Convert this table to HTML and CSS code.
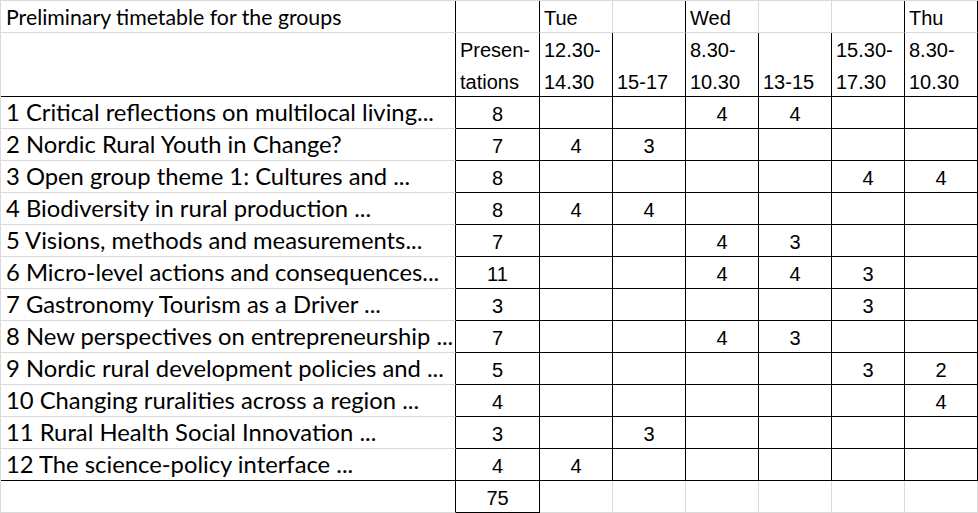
FILE: index.html
```html
<!DOCTYPE html>
<html>
<head>
<meta charset="utf-8">
<link rel="stylesheet" href="styles.css">
</head>
<body>
<div class="sheet">
  <div class="c title gb">Preliminary timetable for the groups</div>
  <div class="c gb"></div>
  <div class="c gb gr">Tue</div>
  <div class="c gb"></div>
  <div class="c gb gr">Wed</div>
  <div class="c gb gr"></div>
  <div class="c gb"></div>
  <div class="c gb">Thu</div>

  <div class="c name"></div>
  <div class="c">Presen-<br>tations</div>
  <div class="c">12.30-<br>14.30</div>
  <div class="c"><br>15-17</div>
  <div class="c">8.30-<br>10.30</div>
  <div class="c"><br>13-15</div>
  <div class="c">15.30-<br>17.30</div>
  <div class="c">8.30-<br>10.30</div>

  <div class="c name gb">1 Critical reflections on multilocal living...</div>
  <div class="c n">8</div><div class="c n"></div><div class="c n"></div><div class="c n">4</div><div class="c n">4</div><div class="c n"></div><div class="c n"></div>

  <div class="c name gb">2 Nordic Rural Youth in Change?</div>
  <div class="c n">7</div><div class="c n">4</div><div class="c n">3</div><div class="c n"></div><div class="c n"></div><div class="c n"></div><div class="c n"></div>

  <div class="c name gb">3 Open group theme 1: Cultures and ...</div>
  <div class="c n">8</div><div class="c n"></div><div class="c n"></div><div class="c n"></div><div class="c n"></div><div class="c n">4</div><div class="c n">4</div>

  <div class="c name gb">4 Biodiversity in rural production ...</div>
  <div class="c n">8</div><div class="c n">4</div><div class="c n">4</div><div class="c n"></div><div class="c n"></div><div class="c n"></div><div class="c n"></div>

  <div class="c name gb">5 Visions, methods and measurements...</div>
  <div class="c n">7</div><div class="c n"></div><div class="c n"></div><div class="c n">4</div><div class="c n">3</div><div class="c n"></div><div class="c n"></div>

  <div class="c name gb">6 Micro-level actions and consequences...</div>
  <div class="c n">11</div><div class="c n"></div><div class="c n"></div><div class="c n">4</div><div class="c n">4</div><div class="c n">3</div><div class="c n"></div>

  <div class="c name gb">7 Gastronomy Tourism as a Driver ...</div>
  <div class="c n">3</div><div class="c n"></div><div class="c n"></div><div class="c n"></div><div class="c n"></div><div class="c n">3</div><div class="c n"></div>

  <div class="c name gb">8 New perspectives on entrepreneurship ...</div>
  <div class="c n">7</div><div class="c n"></div><div class="c n"></div><div class="c n">4</div><div class="c n">3</div><div class="c n"></div><div class="c n"></div>

  <div class="c name gb">9 Nordic rural development policies and ...</div>
  <div class="c n">5</div><div class="c n"></div><div class="c n"></div><div class="c n"></div><div class="c n"></div><div class="c n">3</div><div class="c n">2</div>

  <div class="c name gb">10 Changing ruralities across a region ...</div>
  <div class="c n">4</div><div class="c n"></div><div class="c n"></div><div class="c n"></div><div class="c n"></div><div class="c n"></div><div class="c n">4</div>

  <div class="c name gb">11 Rural Health Social Innovation ...</div>
  <div class="c n">3</div><div class="c n"></div><div class="c n">3</div><div class="c n"></div><div class="c n"></div><div class="c n"></div><div class="c n"></div>

  <div class="c name">12 The science-policy interface ...</div>
  <div class="c n">4</div><div class="c n">4</div><div class="c n"></div><div class="c n"></div><div class="c n"></div><div class="c n"></div><div class="c n"></div>

  <div class="c name gb"></div>
  <div class="c n">75</div>
  <div class="c gb gr"></div><div class="c gb gr"></div><div class="c gb gr"></div><div class="c gb gr"></div><div class="c gb gr"></div><div class="c gb gr"></div>
</div>
</body>
</html>
```

FILE: styles.css
```css
* { box-sizing: border-box; }
html, body { margin: 0; padding: 0; background: #fff; }
.sheet {
  display: grid;
  grid-template-columns: 455px 84px repeat(6, 73px);
  grid-template-rows: 32px 64px repeat(13, 32px);
  width: 978px;
  border-left: 1px solid #dadada;
  border-top: 1px solid #dadada;
  font-family: "Liberation Sans", Arial, sans-serif;
  font-size: 20px;
  color: #000;
}
.c {
  border-right: 1px solid #000;
  border-bottom: 1px solid #000;
  padding: 1px 0 0 4px;
  line-height: 32px;
  white-space: nowrap;
  overflow: hidden;
}
.gb { border-bottom-color: #dadada; }
.gr { border-right-color: #dadada; }
.n { text-align: center; padding-left: 0; }
.title {
  font-family: Lato, sans-serif;
  font-size: 21.3px;
  line-height: 32px;
  padding: 0 0 0 5px;
}
.name {
  font-family: Lato, sans-serif;
  font-size: 23.8px;
  line-height: 31px;
  padding: 0 0 0 5px;
}
```
